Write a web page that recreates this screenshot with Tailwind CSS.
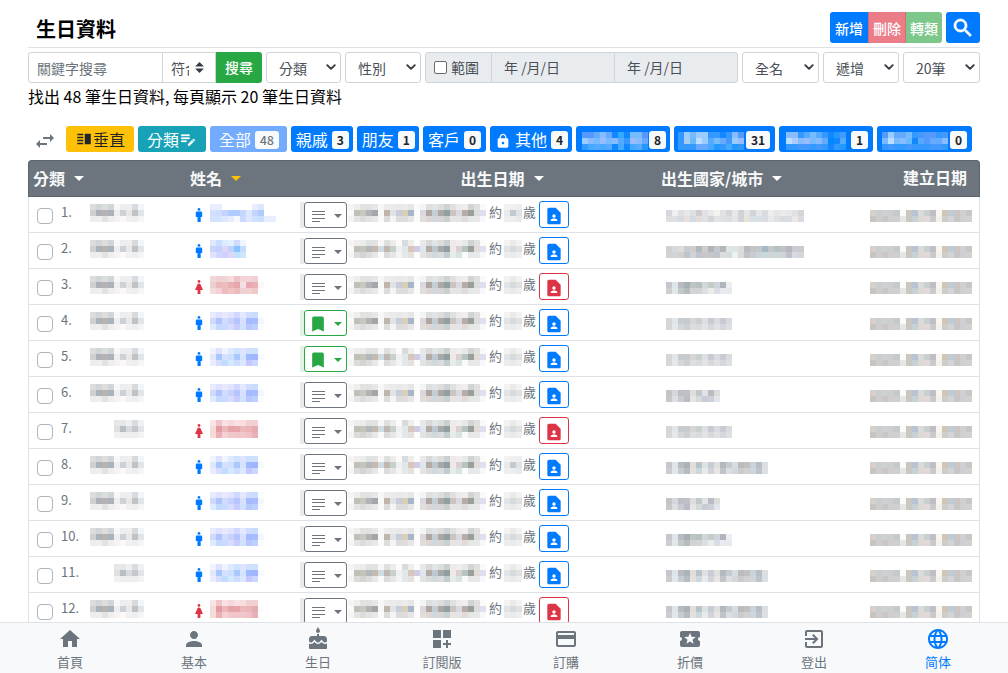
<!DOCTYPE html>
<html lang="zh-Hant">
<head>
<meta charset="utf-8">
<meta name="viewport" content="width=device-width, initial-scale=1">
<title>生日資料</title>
<script src="https://cdn.jsdelivr.net/npm/@tailwindcss/browser@4"></script>
</head>
<body class="bg-white text-black text-base font-['Noto_Sans_CJK_TC',sans-serif]">

<svg class="hidden" aria-hidden="true">
  <symbol id="i-search" viewBox="0 0 24 24"><path stroke="currentColor" stroke-width=".7" d="M15.5 14h-.79l-.28-.27C15.41 12.59 16 11.11 16 9.5 16 5.91 13.09 3 9.5 3S3 5.91 3 9.5 5.91 16 9.5 16c1.61 0 3.09-.59 4.23-1.57l.27.28v.79l5 4.99L20.49 19l-4.99-5zm-6 0C7.01 14 5 11.99 5 9.5S7.01 5 9.5 5 14 7.01 14 9.5 11.99 14 9.5 14z"/></symbol>
  <symbol id="i-chevron" viewBox="0 0 16 16"><path d="M2 5l6 6 6-6" fill="none" stroke="currentColor" stroke-width="3" stroke-linecap="round" stroke-linejoin="round"/></symbol>
  <symbol id="i-sort" viewBox="0 0 4 5"><path d="M2 0L0 2h4zm0 5L0 3h4z"/></symbol>
  <symbol id="i-swap" viewBox="0 0 24 24"><path d="M6.99 11L3 15l3.99 4v-3H14v-2H6.99v-3zM21 9l-3.99-4v3H10v2h7.01v3L21 9z"/></symbol>
  <symbol id="i-split" viewBox="0 0 24 24"><path d="M3 15h8v-2H3v2zm0 4h8v-2H3v2zm0-8h8V9H3v2zm0-6v2h8V5H3zm10 0h8v14h-8V5z"/></symbol>
  <symbol id="i-note" viewBox="0 0 24 24"><path d="M3 10h11v2H3zm0-2h11V6H3zm0 8h7v-2H3zm15.01-3.13l.71-.71c.39-.39 1.02-.39 1.41 0l.71.71c.39.39.39 1.02 0 1.41l-.71.71-2.12-2.12zm-.71.71l-5.3 5.3V21h2.12l5.3-5.3-2.12-2.12z" stroke="currentColor" stroke-width=".4"/></symbol>
  <symbol id="i-lock" viewBox="0 0 24 24"><path d="M18 8h-1V6c0-2.76-2.24-5-5-5S7 3.24 7 6v2H6c-1.1 0-2 .9-2 2v10c0 1.1.9 2 2 2h12c1.1 0 2-.9 2-2V10c0-1.1-.9-2-2-2zm-6 9c-1.1 0-2-.9-2-2s.9-2 2-2 2 .9 2 2-.9 2-2 2zm3.1-9H8.9V6c0-1.71 1.39-3.1 3.1-3.1s3.1 1.39 3.1 3.1v2z"/></symbol>
  <symbol id="i-caret" viewBox="0 0 10 5"><path d="M0 0h10L5 5z"/></symbol>
  <symbol id="i-man" viewBox="0 0 8 14"><circle cx="4" cy="1.4" r="1.4"/><path d="M2 3.4h4c.7 0 1.2.5 1.2 1.2V9H5.7v5H2.5V9H.8V4.600c0-.7.5-1.200 1.200-1.200z"/></symbol>
  <symbol id="i-woman" viewBox="0 0 8 14"><circle cx="4" cy="1.400" r="1.400"/><path d="M4 3.400c.8 0 1.300.4 1.600 1L8 10H5.400v4H2.600v-4H0l2.400-5.600c.3-.6.8-1 1.600-1z"/></symbol>
  <symbol id="i-lines" viewBox="0 0 13 11"><path d="M0 0h13v1H0zM0 3.300h13v1H0zM0 6.600h13v1H0zM0 10h8v1H0z"/></symbol>
  <symbol id="i-bookmark" viewBox="0 0 24 24"><path d="M17 3H7c-1.1 0-1.99.9-1.99 2L5 21l7-3 7 3V5c0-1.1-.9-2-2-2z"/></symbol>
  <symbol id="i-contact" viewBox="0 0 24 24"><path d="M14 2H6c-1.1 0-2 .9-2 2v16c0 1.1.9 2 2 2h12c1.1 0 2-.9 2-2V8l-6-6zm-2 8c1.1 0 2 .9 2 2s-.9 2-2 2-2-.9-2-2 .9-2 2-2zm4 8H8v-.57c0-.81.48-1.53 1.22-1.85.85-.37 1.79-.58 2.78-.58.99 0 1.93.21 2.78.58.74.32 1.22 1.04 1.22 1.85V18z"/></symbol>
</svg>

<main class="px-7 pt-3">
  <header class="flex items-center justify-between border-b border-[#dee2e6] pb-1">
    <h1 class="pl-2 pt-[2px] text-xl leading-6 font-bold">生日資料</h1>
    <div class="flex gap-1 text-sm font-medium text-white">
      <div class="flex">
        <button class="h-[31px] rounded-l-[3px] bg-[#007bff] px-[5px]">新增</button>
        <button class="h-[31px] border-x border-[#d36c78] bg-[#eb7d88] px-1" disabled>刪除</button>
        <button class="h-[31px] rounded-r-[3px] bg-[#7dc78a] px-1" disabled>轉類</button>
      </div>
      <button class="flex h-[31px] w-[34px] items-center justify-center rounded-[3px] bg-[#007bff]" aria-label="搜尋選項"><svg class="size-6 fill-current"><use href="#i-search"/></svg></button>
    </div>
  </header>

  <form class="mt-1 flex gap-1 text-sm text-[#495057]" onsubmit="return false">
    <div class="flex h-[31px] flex-1">
      <input class="w-0 flex-1 rounded-l-[3px] border border-[#ced4da] px-2 placeholder:text-[#6c757d]" type="text" placeholder="關鍵字搜尋" aria-label="關鍵字搜尋">
      <div class="relative -ml-px flex">
        <select class="w-[54px] appearance-none border border-[#ced4da] bg-white pr-[26px] pl-2" aria-label="符合方式"><option>符合</option></select>
        <svg class="pointer-events-none absolute top-[10px] right-3 h-[11px] w-[9px] fill-[#343a40]"><use href="#i-sort"/></svg>
      </div>
      <button class="w-[46px] rounded-r-[3px] bg-[#28a745] pb-px font-medium text-white">搜尋</button>
    </div>
    <div class="relative flex">
      <select class="w-[75px] appearance-none rounded-[3px] border border-[#ced4da] bg-white pl-3" aria-label="分類"><option>分類</option></select>
      <svg class="pointer-events-none absolute top-[10px] right-[5px] size-[10px] text-[#343a40]"><use href="#i-chevron"/></svg>
    </div>
    <div class="relative flex">
      <select class="w-[76px] appearance-none rounded-[3px] border border-[#ced4da] bg-white pl-3" aria-label="性別"><option>性別</option></select>
      <svg class="pointer-events-none absolute top-[10px] right-[5px] size-[10px] text-[#343a40]"><use href="#i-chevron"/></svg>
    </div>
    <div class="flex">
      <label class="flex w-[67px] items-center gap-1 rounded-l-[3px] border border-[#ced4da] bg-[#e9ecef] pb-px pl-2"><input class="size-[13px] appearance-none rounded-[2px] border border-[#6b6b6b] bg-white" type="checkbox">範圍</label>
      <input class="-ml-px w-[124px] border border-[#ced4da] bg-[#e9ecef] pb-[2px] pl-3" type="text" value="年 /月/日" aria-label="開始日期" disabled>
      <input class="-ml-px w-[124px] rounded-r-[3px] border border-[#ced4da] bg-[#e9ecef] pb-[2px] pl-3" type="text" value="年 /月/日" aria-label="結束日期" disabled>
    </div>
    <div class="relative flex">
      <select class="w-[77px] appearance-none rounded-[3px] border border-[#ced4da] bg-white pl-3" aria-label="名稱"><option>全名</option></select>
      <svg class="pointer-events-none absolute top-[10px] right-[5px] size-[10px] text-[#343a40]"><use href="#i-chevron"/></svg>
    </div>
    <div class="relative flex">
      <select class="w-[76px] appearance-none rounded-[3px] border border-[#ced4da] bg-white pl-3" aria-label="次序"><option>遞增</option></select>
      <svg class="pointer-events-none absolute top-[10px] right-[5px] size-[10px] text-[#343a40]"><use href="#i-chevron"/></svg>
    </div>
    <div class="relative flex">
      <select class="w-[77px] appearance-none rounded-[3px] border border-[#ced4da] bg-white pl-3" aria-label="每頁筆數"><option>20筆</option></select>
      <svg class="pointer-events-none absolute top-[10px] right-[5px] size-[10px] text-[#343a40]"><use href="#i-chevron"/></svg>
    </div>
  </form>

  <p class="mt-px leading-6">找出 48 筆生日資料, 每頁顯示 20 筆生日資料</p>

  <div class="mt-[18px] flex flex-wrap gap-1 leading-[26px] whitespace-nowrap text-white">
    <button class="flex h-[26px] w-[34px] items-center justify-center pt-1" aria-label="切換"><svg class="size-6 shrink-0 fill-[#6c757d]"><use href="#i-swap"/></svg></button>
    <button class="flex h-[26px] items-center rounded-[3px] bg-[#ffc107] px-[9px] text-[#212529]"><svg class="size-[18px] fill-current"><use href="#i-split"/></svg>垂直</button>
    <button class="flex h-[26px] items-center rounded-[3px] bg-[#17a2b8] px-[9px]">分類<svg class="size-[18px] fill-current"><use href="#i-note"/></svg></button>
    <button class="flex h-[26px] items-center gap-1 rounded-[3px] bg-[#73abff] pr-2 pl-[9px]" disabled>全部<span class="mt-[2px] rounded-[3px] bg-[#f8f9fa] px-[5px] text-xs leading-[18px] font-medium text-[#6c757d]">48</span></button>
    <button class="flex h-[26px] items-center gap-1 rounded-[3px] bg-[#007bff] pr-1 pl-[5px]">親戚<span class="mt-[2px] rounded-[3px] bg-[#f8f9fa] px-[5px] text-xs leading-[18px] font-bold text-[#212529]">3</span></button>
    <button class="flex h-[26px] items-center gap-1 rounded-[3px] bg-[#007bff] pr-1 pl-[5px]">朋友<span class="mt-[2px] rounded-[3px] bg-[#f8f9fa] px-[5px] text-xs leading-[18px] font-bold text-[#212529]">1</span></button>
    <button class="flex h-[26px] items-center gap-1 rounded-[3px] bg-[#007bff] px-[5px]">客戶<span class="mt-[2px] rounded-[3px] bg-[#f8f9fa] px-[5px] text-xs leading-[18px] font-bold text-[#212529]">0</span></button>
    <button class="flex h-[26px] items-center gap-1 rounded-[3px] bg-[#007bff] pr-1 pl-[5px]"><svg class="mt-1 size-4 fill-current"><use href="#i-lock"/></svg>其他<span class="mt-[2px] rounded-[3px] bg-[#f8f9fa] px-[5px] text-xs leading-[18px] font-bold text-[#212529]">4</span></button>
    <button class="flex h-[26px] w-[94px] items-center justify-between rounded-[3px] bg-[#007bff] pr-1 pl-[6px]"><span class="pt-[4px]" data-mosaic="tag1"></span><span class="mt-[2px] rounded-[3px] bg-[#f8f9fa] px-[5px] text-xs leading-[18px] font-bold text-[#212529]">8</span></button>
    <button class="flex h-[26px] w-[101px] items-center justify-between rounded-[3px] bg-[#007bff] pr-[5px] pl-[4px]"><span class="pt-[4px]" data-mosaic="tag2"></span><span class="mt-[2px] rounded-[3px] bg-[#f8f9fa] px-[5px] text-xs leading-[18px] font-bold text-[#212529]">31</span></button>
    <button class="flex h-[26px] w-[94px] items-center justify-between rounded-[3px] bg-[#007bff] pr-[5px] pl-[7px]"><span class="pt-[4px]" data-mosaic="tag3"></span><span class="mt-[2px] rounded-[3px] bg-[#f8f9fa] px-[5px] text-xs leading-[18px] font-bold text-[#212529]">1</span></button>
    <button class="flex h-[26px] w-[95px] items-center justify-between rounded-[3px] bg-[#007bff] pr-[5px] pl-[5px]"><span class="pt-[4px]" data-mosaic="tag4"></span><span class="mt-[2px] rounded-[3px] bg-[#f8f9fa] px-[5px] text-xs leading-[18px] font-bold text-[#212529]">0</span></button>
  </div>

  <table class="mt-2 w-full table-fixed border-separate border-spacing-0">
    <colgroup><col class="w-[157px]"><col class="w-[163px]"><col class="w-[306px]"><col><col class="w-[119px]"></colgroup>
    <thead class="text-[#f8f9fa]">
      <tr class="h-[37px] leading-6">
        <th class="rounded-tl-[4px] border-y border-l border-[#5c636a] bg-[#6c757d] pb-px pl-1 text-left"><button class="flex items-center gap-[9px] font-bold">分類<svg class="h-[5px] w-[10px] fill-white"><use href="#i-caret"/></svg></button></th>
        <th class="border-y border-[#5c636a] bg-[#6c757d] pb-px pl-[5px] text-left"><button class="flex items-center gap-[9px] font-bold">姓名<svg class="h-[5px] w-[10px] fill-[#ffc107]"><use href="#i-caret"/></svg></button></th>
        <th class="border-y border-[#5c636a] bg-[#6c757d] pb-px pl-[2px]"><button class="mx-auto flex items-center gap-[9px] font-bold">出生日期<svg class="h-[5px] w-[10px] fill-white"><use href="#i-caret"/></svg></button></th>
        <th class="border-y border-[#5c636a] bg-[#6c757d] pb-px pl-[7px] text-left"><button class="flex items-center gap-[9px] font-bold">出生國家/城市<svg class="h-[5px] w-[10px] fill-white"><use href="#i-caret"/></svg></button></th>
        <th class="rounded-tr-[4px] border-y border-r border-[#5c636a] bg-[#6c757d] pr-3 pb-1 text-right font-bold">建立日期</th>
      </tr>
    </thead>
    <tbody id="rows" class="text-[13px] leading-[18px] text-[#6c757d]"></tbody>
  </table>
</main>

<nav class="fixed inset-x-0 bottom-0 flex h-[51px] border-t border-[#dee2e6] bg-[#f8f9fa] px-2 pt-1 text-[13px] leading-5 text-[#6c757d]">
  <a href="#" class="flex flex-1 flex-col items-center gap-px"><svg class="size-6 shrink-0 fill-current" viewBox="0 0 24 24"><path d="M10 20v-6h4v6h5v-8h3L12 3 2 12h3v8z"/></svg>首頁</a>
  <a href="#" class="flex flex-1 flex-col items-center gap-px"><svg class="size-6 shrink-0 fill-current" viewBox="0 0 24 24"><path d="M12 12c2.21 0 4-1.79 4-4s-1.79-4-4-4-4 1.79-4 4 1.79 4 4 4zm0 2c-2.67 0-8 1.34-8 4v2h16v-2c0-2.66-5.33-4-8-4z"/></svg>基本</a>
  <a href="#" class="flex flex-1 flex-col items-center gap-px"><svg class="size-6 shrink-0 fill-current" viewBox="0 0 24 24"><path d="M12 6c1.11 0 2-.9 2-2 0-.38-.1-.73-.29-1.03L12 0l-1.71 2.97c-.19.3-.29.65-.29 1.03 0 1.1.9 2 2 2zm4.6 9.99l-1.07-1.07-1.08 1.07c-1.3 1.3-3.58 1.31-4.89 0l-1.07-1.07-1.09 1.07C6.75 16.64 5.88 17 4.96 17c-.73 0-1.4-.23-1.96-.61V21c0 .55.45 1 1 1h16c.55 0 1-.45 1-1v-4.61c-.56.38-1.23.61-1.96.61-.92 0-1.79-.36-2.44-1.01zM18 9h-5V7h-2v2H6c-1.66 0-3 1.34-3 3v1.54c0 1.08.88 1.96 1.96 1.96.52 0 1.02-.2 1.38-.57l2.14-2.13 2.13 2.13c.74.74 2.03.74 2.77 0l2.14-2.13 2.13 2.13c.37.37.86.57 1.38.57 1.08 0 1.96-.88 1.96-1.96V12C21 10.34 19.66 9 18 9z"/></svg>生日</a>
  <a href="#" class="flex flex-1 flex-col items-center gap-px"><svg class="size-6 shrink-0 fill-current" viewBox="0 0 24 24"><path d="M3 3h8v8H3zM13 3h8v8h-8zM3 13h8v8H3zM18 13h-2v3h-3v2h3v3h2v-3h3v-2h-3z"/></svg>訂閱版</a>
  <a href="#" class="flex flex-1 flex-col items-center gap-px"><svg class="size-6 shrink-0 fill-current" viewBox="0 0 24 24"><path d="M20 4H4c-1.11 0-1.99.89-1.99 2L2 18c0 1.11.89 2 2 2h16c1.11 0 2-.89 2-2V6c0-1.11-.89-2-2-2zm0 14H4v-6h16v6zm0-10H4V6h16v2z"/></svg>訂購</a>
  <a href="#" class="flex flex-1 flex-col items-center gap-px"><svg class="size-6 shrink-0 fill-current" viewBox="0 0 24 24"><path d="M20 12c0-1.1.9-2 2-2V6c0-1.1-.9-2-2-2H4c-1.1 0-1.99.9-1.99 2v4c1.1 0 1.99.9 1.99 2s-.89 2-2 2v4c0 1.1.9 2 2 2h16c1.1 0 2-.9 2-2v-4c-1.1 0-2-.9-2-2zm-4.42 4.8L12 14.5l-3.58 2.3 1.08-4.12-3.29-2.69 4.24-.25L12 5.8l1.54 3.95 4.24.25-3.29 2.69 1.09 4.11z"/></svg>折價</a>
  <a href="#" class="flex flex-1 flex-col items-center gap-px"><svg class="size-6 shrink-0 fill-current" viewBox="0 0 24 24"><path d="M10.09 15.59L11.5 17l5-5-5-5-1.41 1.41L12.67 11H3v2h9.67l-2.58 2.59zM19 3H5c-1.11 0-2 .9-2 2v4h2V5h14v14H5v-4H3v4c0 1.1.89 2 2 2h14c1.1 0 2-.9 2-2V5c0-1.1-.9-2-2-2z"/></svg>登出</a>
  <a href="#" class="flex flex-1 flex-col items-center gap-px text-[#007bff]"><svg class="size-6 shrink-0 fill-current" viewBox="0 0 24 24"><path d="M11.99 2C6.47 2 2 6.48 2 12s4.47 10 9.99 10C17.52 22 22 17.52 22 12S17.52 2 11.99 2zm6.93 6h-2.95c-.32-1.25-.78-2.45-1.38-3.56 1.84.63 3.37 1.91 4.33 3.56zM12 4.04c.83 1.2 1.48 2.53 1.91 3.96h-3.82c.43-1.43 1.08-2.76 1.91-3.96zM4.26 14C4.1 13.36 4 12.69 4 12s.1-1.36.26-2h3.38c-.08.66-.14 1.32-.14 2 0 .68.06 1.34.14 2H4.26zm.82 2h2.95c.32 1.25.78 2.45 1.38 3.56-1.84-.63-3.37-1.9-4.33-3.56zm2.95-8H5.08c.96-1.66 2.49-2.93 4.33-3.56C8.81 5.55 8.35 6.75 8.03 8zM12 19.96c-.83-1.2-1.48-2.53-1.91-3.96h3.82c-.43 1.43-1.08 2.76-1.91 3.96zM14.34 14H9.66c-.09-.66-.16-1.32-.16-2 0-.68.07-1.35.16-2h4.68c.09.65.16 1.32.16 2 0 .68-.07 1.34-.16 2zm.25 5.56c.6-1.11 1.06-2.31 1.38-3.56h2.95c-.96 1.65-2.49 2.93-4.33 3.56zM16.36 14c.08-.66.14-1.32.14-2 0-.68-.06-1.34-.14-2h3.38c.16.64.26 1.31.26 2s-.1 1.36-.26 2h-3.38z"/></svg><span lang="zh-Hans" class="font-['Noto_Sans_CJK_SC',sans-serif]">简体</span></a>
</nav>

<script>
// Masked values: each entry is a list of rows of 6px cells, one hex colour per cell.
const masks = {
  tag1: ['59f 59f 6af 8bf 6af 18f 3af 18f 7bf 7bf 59f', '9cf 8bf 7bf 9bf 7bf 8bf 5af 39f 9bf 8bf 6af', '39f 4af 5af 4af 5af 18f 4af 18f 4af 5af 29f'],
  tag2: ['39f 9cf 7bf 9cf 9cf 39f 39f 18f 39f 8bf 59f', '39f ace 6bf bdf 9cf 5af 7bf 6af 49f 9cf 9bf', '39f 39f 39f 6af 6af 4af 29f 39f 4af 29f 39f'],
  tag3: ['8bf 8bf 39f 5af 7bf 5af 39f 18f 29f 49f', 'bdf acf 8bf 9bf 7bf 8bf 6af 08f 18f 5af', '39f 39f 49f 49f 39f 49f 39f 18f 39f 29f'],
  tag4: ['59f 9cf 6af 6af 7bf 39f 49f 59f 59f 39f 49f', '7bf bdf 7bf 8bf 6bf 18f 5af 59f 6af 6af 8bf', '39f 49f 39f 39f 49f 39f 39f 39f 49f 49f 39f'],
  cat: ['ddd d0d5d8 ddd d0d5d8 f8f8f8 eee eee d6dadd f1f4f8', 'd0d0d0 abb3ba b8b3b0 abb3ba eee ccd3d8 e8e8e8 bfc3c6 e0e5e8', 'eee eee e2e2e2 eee f4f4f4 fdf8f5 f1f1f1 eee f3f5f7'],
  catShort: ['e6e8e6 e6e6e6 f0f0f0 d8dcdf eef1f4', 'e0e0e0 b8bfc4 d8dadd c4c8cc e0e4e8', 'f1f1f1 eee eee eee f2f4f6'],
  n1: ['e8eeff e8eeff fff fff fff fff fff e8eeff dde6ff fff fff', 'd0e0ff d0dcff c4d4ff b0ccff b0ccff c4d8ff e0e8ff c4d4ff b0ccff fff fff', 'd0e4ff d0e4ff dde8ff e8ecff f8f8ff c8d8ff dde8ff d0e0ff c8e0ff e8eeff e8eeff'],
  n2: ['dee8ff c8e0ff ddecff e0f0ff d0dcff f0f5ff', 'c8d4ff c4d0ff dcd8f8 c0d0ff 88c4ff c4dcff', 'e4e0ff d0d8ff d0d0ff ddd8f8 bfe0ff cfe4ff'],
  nb: ['e8eaff dde2ff e8e8ff e0e4ff d0d8ff e4e8ff cfdcff c8dcff fbfdff', 'd0d8ff b0c4ff d0dcff c8d0ff b8c4ff d8e0ff a4bcff a8bcff f0f8ff', 'dcecff c4d8ff c8dcff d8dcff c8ccff d0e0ff b8c8ff bcd0ff fafcff'],
  nc: ['f0f4ff dde2ff f0f4ff dceaff cfe2ff dce4ff cfdfff d0e0ff fff', 'e0e8ff a8c8ff d8e0ff cfe0ff a8c8ff d4e4ff a0b8ff a0b4ff f5faff', 'e8ecff d8dcff c0dcff d4e8ff d0dcff dce8ff c4c8ff c8d8ff fff'],
  r1: ['f0d8d8 f0d0d0 f0d4d4 f4dcdc ecc4c8 f0d4d8 f4d4d8 f0d0d4 fff', 'ecd0cc ecb8bc ecbcbc e8b0b0 e4a8ac f4e0e4 e8a8b0 ecb0b4 fcf8fa', 'f4dcdc f4d0d8 ecbcc0 f0c4c4 ecbcbc f0d0d4 f0d0d0 f0c8c8 fff'],
  r2: ['fbe4e4 f0c4c8 f8e0e4 f4d8dc f8e0e4 f8dce0 f0d0d0 f0d0d0 fff', 'f4dcd8 e49ca4 ecb8bc e4a4a8 e8a4ac ecb8bc ecb4b8 e4acb0 fafaff', 'f4dcd4 ecb0b8 f4d0d4 f0c8cc f0c4c8 f0c8cc f0c0c8 e8b0b4 fff'],
  dateA: ['f6f4f2 f0eeec e3e3e1 dfe2e2 e6e6e6 f7f7f7 ececec eaeae8 e8e8e8 ecebe9 e6e6e8 fafafa f4f4f4 dedede e1e5e6 dcdcda cdd3d4 e0e0e0 ecebe9 eee d0d4d4 e0e0de fafafa', 'fafaf8 c0c0b8 c8c8c0 b0b4b8 a4a6a8 f8f8f8 c0b4ac dfe3e2 c8ccdc d6d0b8 a8b4c8 fbfcfc dcd6de b0a8a0 c4ccd4 aca8a8 90a0a0 ccc4c0 dcd8e0 b8aca8 98a09c ddd e0dff0', 'f6f4f2 e4e4e2 dcdcda e3e3e3 e8e8e8 fbfbfb dcdcdc f4f4f2 dcdcde e0dcdc e6e6ea fcfcfc e2dedc dcd6d4 d0d8dc d8d4d4 c8d0d0 e8e4e0 e4e4e8 e0dcd8 e4e8e8 e8e8e8 f8f8fc'],
  dateB: ['f6f4f2 f0eeec e8eceb dfe2e2 e2e2e0 f7f7f7 dde0df ececec fafaf8 d8dcdc eeedeb fcfcfc e8e8e8 d8d8d8 e1e5e6 dcdcda c8d0d0 ecebe9 f0eeec e8e8e8 d0d4d4 e0e0de fafafa', 'fafaf8 c0c0b8 c4c4bc b4b8bc c4bab0 d0dce4 c0b8b0 c8d0cc f0f0ee dfe8ec dac6b4 d0cce4 dfe6ee b4aca4 bcc8d0 a8a8a8 90a0a0 f4e8e4 d8d0d4 b8c4c0 98a09c e4dcd8 e0dff0', 'f6f4f2 dcdcda d4d4d2 dcdcda e8e8e8 fbfbfb dcdcdc e8e6e4 f4f4f4 e4e8e8 e6e0dc fcfcfc e2e4e0 d8dcdc d0d8dc d8dcdc c0ccd0 e8ece8 d8e4e4 fafafa e4e8e8 e8e8e8 f8f8fc'],
  age: ['f2f2f2 f0f0f0 eceff1', 'e8eaeb c4c9cd e0e3e6', 'eee eceef0 e8ebed'],
  ageB: ['f2f2f2 eaeaea f0f2f4', 'e2e5e8 d8dbde dfe1e3', 'ededed e8eaec eceef0'],
  p1: ['d4d8dc f0f0f0 dde0e4 e8e8ea dde0e4 d0cccd e2e2e6 e8eaea f2f2ee e2e2e4 d4d6da e6e8ea d0d4d6 e6e6e6 d0d4d8 e4e6ea d6dce0 eceef0 e4e8ea ecebea e8e8ec dfe2e4 d6d6da', 'dddfe2 dddfe2 d4dade e6e0de d0dce4 e4dcdc e0e2e4 d0d6da e2e4e4 dfe0e4 dcdfe2 e4e6ea d0d4d8 e6e2dc d4dfe6 dcdfe2 dadde0 e8e8ea dde0e4 d8dce0 dadce4 ece8e4 d8dbe2'],
  p2: ['d0d0d0 d4dadc dcdcda c8ccd0 d0cccc b0b8c0 d0cccc b0b4b8 c4c8cc b4b8bc dfe4e6 e0e4e4 dcdcdc b8bcc2 c4c4c8 c0c8c8 a8b8c4 c0c8ca b8c0c4 c0c4c4 b8b8bc c8ccd4 d0c8ca', 'd0d4d4 d0d4d6 d0d0d0 bcc4cc d0d4d8 c0c4cc c8c8c8 c4c8cc c0c4c8 dcdcdc d4dce0 eaf2f2 dadada c0c4c8 c8ccd0 ccd4d8 c8d8dc d0d4d6 ccd8d8 d0d4d6 c0c0c8 d4dce4 d6d4dc'],
  p3: ['c4c8cc dfe6ea b8bcc0 a4b0b8 bcc4c4 b8c0c0 d0d8dc c8ccc8 d0d4dc b0b4bc eceef2', 'd0ccd0 e0e8ec c4c8c8 b8bcbe d0d4d6 d4d4d4 d8e0e4 ecece8 dcdce6 e8eaf0 e6eaec'],
  p3b: ['d4d6d8 e2e6e8 c8ccd0 c4ccd0 d8d6d4 c8d0d0 dce0e4 c8ccd0 d8dce0 c8ccd2 d8dce0', 'd8d6d8 e4e8ec d4d6d8 ccd0d2 dcdee0 d8dadc e0e4e6 d8d8d8 e0e0e6 d4d8dc dce0e2'],
  p4: ['c4c4c4 d4d8dc bcc0c4 c0c0c8 e0dcdc c0c8cc e0e2e6 b8bcc4 dcdcdc', 'c8c8c8 dce0e2 c8ccd0 b8bcc4 e8e4e4 d4dadc c8ccd4 ccd0d8 e2e6ea'],
  p5: ['c4c8cc dfe6ea b8bcc0 a8b4bc e4dcd8 b8c4cc dfe2e4 c8ccd4 dfe0e0 b4b8c0 c4ccd0 d8dce0 b8bcc0 c4c0c0 c8d4dc b8bec2 dadfe2', 'ccccd0 e0e8ec c8ccd0 b8bcbe e4e0dc ccd8e0 e8eaec d0d4d8 ece4e4 c0c4c8 dcdfe2 d4d8dc c8ccd0 d4d0d0 ccd6dc c0c4c8 dce0e4'],
  made: ['d8d0c8 c8d0ce d0d0d4 ccced0 c4cacb fbfbfb c8c8c0 b8c4d0 dadada c8d0ce c0bec4 f8f4ee d0c6b8 c0ccd4 ccc4c6 d0d0d4 c4c8c6', 'c6c3c0 d0ccca c8c6c6 d0cfd0 d0cfd0 e6e6e6 c8c8be c8d2d6 dcd8d4 e2dada ccc8cc f4f0ea d0ccc8 d2d4d8 c8c6c6 d0d0d4 d2d2d0'],
};
const mosaic = name => {
  const rows = masks[name].map(r => r.split(' '));
  const w = rows[0].length * 6, h = rows.length * 6;
  const cells = rows.map((r, y) => r.map((c, x) => `<rect x="${x * 6}" y="${y * 6}" width="6" height="6" fill="#${c}"/>`).join('')).join('');
  return `<svg class="block shrink-0" width="${w}" height="${h}" shape-rendering="crispEdges" aria-hidden="true">${cells}</svg>`;
};
document.querySelectorAll('[data-mosaic]').forEach(e => { e.innerHTML = mosaic(e.dataset.mosaic); });

// [category, gender, name, bookmarked, date, age, place]
const people = [
  ['cat', 'm', 'n1', 0, 'dateA', 'age', 'p1'],
  ['cat', 'm', 'n2', 0, 'dateB', 'ageB', 'p2'],
  ['cat', 'f', 'r1', 0, 'dateA', 'ageB', 'p3'],
  ['cat', 'm', 'nb', 1, 'dateA', 'ageB', 'p3b'],
  ['cat', 'm', 'nc', 1, 'dateB', 'ageB', 'p3b'],
  ['cat', 'm', 'nb', 0, 'dateA', 'ageB', 'p4'],
  ['catShort', 'f', 'r2', 0, 'dateB', 'ageB', 'p3b'],
  ['cat', 'm', 'nc', 0, 'dateB', 'age', 'p5'],
  ['cat', 'm', 'nb', 0, 'dateA', 'ageB', 'p4'],
  ['cat', 'm', 'nb', 0, 'dateA', 'ageB', 'p3'],
  ['catShort', 'm', 'nc', 0, 'dateB', 'ageB', 'p5'],
  ['cat', 'f', 'r2', 0, 'dateA', 'ageB', 'p5'],
];
document.getElementById('rows').innerHTML = people.map(([cat, sex, name, mark, date, age, place], i) => {
  const icon = sex === 'm'
    ? '<svg class="h-[14px] w-2 shrink-0 fill-[#007bff]"><use href="#i-man"/></svg>'
    : '<svg class="h-[14px] w-2 shrink-0 fill-[#dc3545]"><use href="#i-woman"/></svg>';
  const menu = mark
    ? '<button class="flex h-[26px] w-[43px] items-center justify-between rounded-[3px] border border-[#28a745] bg-white pt-[3px] pr-1 pl-[3px] text-[#28a745]" aria-label="選單"><svg class="size-[20px] fill-current"><use href="#i-bookmark"/></svg><svg class="h-1 w-2 fill-current"><use href="#i-caret"/></svg></button>'
    : '<button class="flex h-[26px] w-[43px] items-center justify-between rounded-[3px] border border-[#6c757d] bg-white pt-[3px] pr-1 pl-[7px] text-[#6c757d]" aria-label="選單"><svg class="h-[11px] w-[13px] fill-current" shape-rendering="crispEdges"><use href="#i-lines"/></svg><svg class="h-1 w-2 fill-current"><use href="#i-caret"/></svg></button>';
  const strip = mark ? '<span class="h-[26px] w-1 bg-[#e0f2e4]"></span>' : '<span class="h-[26px] w-1 bg-[#e9eaec]"></span>';
  const card = sex === 'm'
    ? '<button class="flex h-[27px] w-[30px] items-center justify-center rounded-[3px] border border-[#007bff] bg-white pt-[2px] text-[#007bff]" aria-label="個人資料"><svg class="size-[20px] fill-current"><use href="#i-contact"/></svg></button>'
    : '<button class="flex h-[27px] w-[30px] items-center justify-center rounded-[3px] border border-[#dc3545] bg-white pt-[2px] text-[#dc3545]" aria-label="個人資料"><svg class="size-[20px] fill-current"><use href="#i-contact"/></svg></button>';
  return `<tr>
    <td class="border-b border-l border-[#dee2e6]"><div class="flex h-[35px] items-center pr-[41px] pl-2">
      <label class="flex items-center gap-2"><span class="pt-[3px]"><input class="block size-4 appearance-none rounded-[4px] border border-[#adb5bd] bg-white" type="checkbox"></span><span class="pb-[5px]">${i + 1}.</span></label>
      <span class="ml-auto pb-[3px]">${mosaic(cat)}</span></div></td>
    <td class="border-b border-[#dee2e6]"><div class="flex h-[35px] items-center pr-px pl-[10px]">
      ${icon}<a href="#" class="ml-[7px] pb-[3px]">${mosaic(name)}</a><span class="ml-auto flex items-center">${strip}${menu}</span></div></td>
    <td class="border-b border-[#dee2e6]"><div class="flex h-[35px] items-center">
      <span class="pb-[3px]">${mosaic(date)}</span><span class="pb-[5px] pl-[3px]">約</span><span class="pb-[3px] pl-[2px]">${mosaic(age)}</span><span class="pr-[3px] pb-[5px] pl-px">歲</span>${card}</div></td>
    <td class="border-b border-[#dee2e6]"><div class="flex h-[35px] items-center pt-[3px] pl-3">${mosaic(place)}</div></td>
    <td class="border-r border-b border-[#dee2e6]"><div class="flex h-[35px] items-center justify-end pt-[3px] pr-[7px]">${mosaic('made')}</div></td>
  </tr>`;
}).join('');
</script>
</body>
</html>
